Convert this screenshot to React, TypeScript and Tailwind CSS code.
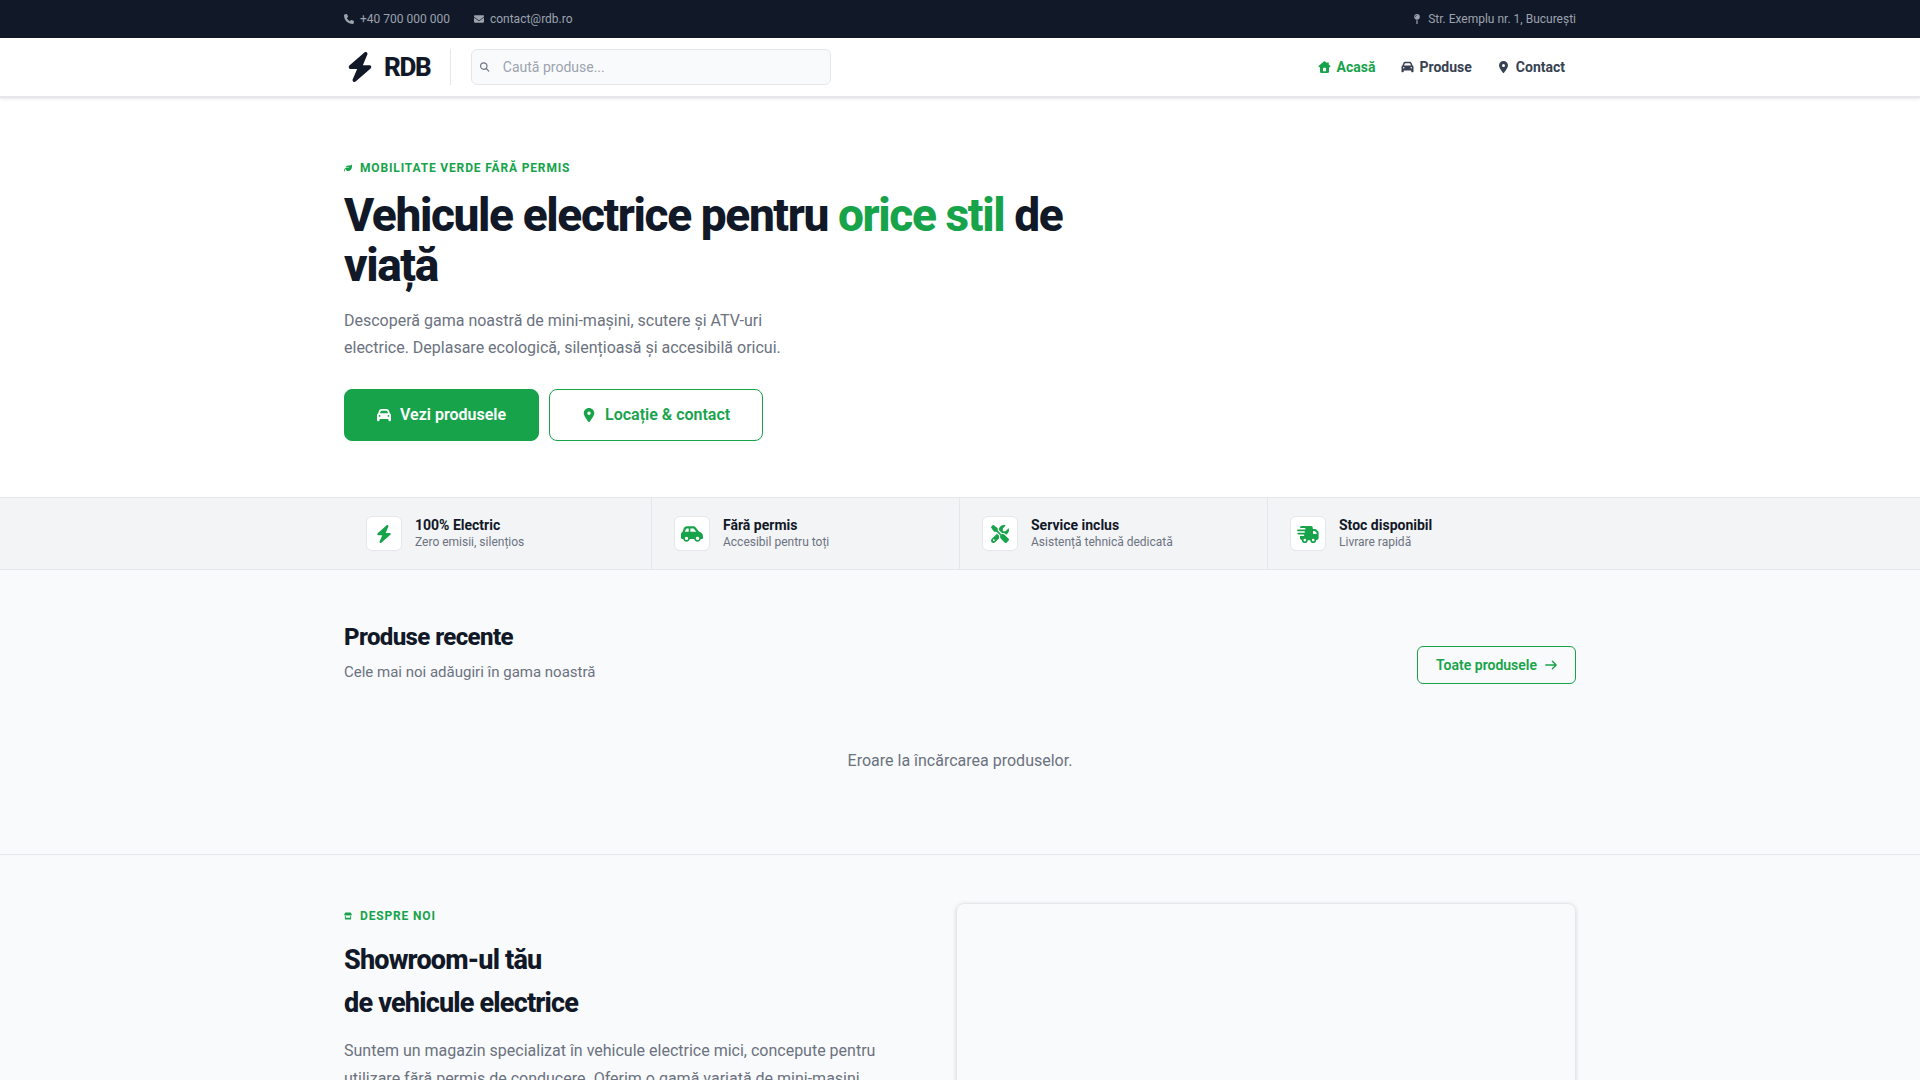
import React from "react";
import {
  FaBolt,
  FaCar,
  FaCarSide,
  FaEnvelope,
  FaLeaf,
  FaLocationDot,
  FaMagnifyingGlass,
  FaMapPin,
  FaPhone,
  FaScrewdriverWrench,
  FaStore,
} from "react-icons/fa6";

const container = "mx-auto w-full max-w-7xl px-6";

const HomeIcon = ({ className }: { className?: string }) => (
  <svg viewBox="0 0 24 24" fill="currentColor" className={className} aria-hidden="true">
    <path
      fillRule="evenodd"
      d="M10.6 1a2.2 2.2 0 0 1 2.8 0L17 4V3h3.500v4L23.300 9.400c1.200 1.100.6 3.100-1 3.100H21V21a3 3 0 0 1-3 3H6a3 3 0 0 1-3-3v-8.500H1.700c-1.600 0-2.200-2-1-3.100zM9 14.500v6h6v-6a1 1 0 0 0-1-1h-4a1 1 0 0 0-1 1z"
    />
  </svg>
);

const TruckIcon = ({ className }: { className?: string }) => (
  <svg viewBox="0 0 22 18" fill="currentColor" className={className} aria-hidden="true">
    <path
      fillRule="evenodd"
      d="M4.500 1H14a1.800 1.800 0 0 1 1.800 1.800V4H18c.5 0 .9.200 1.300.5l1.700 1.800c.4.400.6.800.6 1.300V13a2 2 0 0 1-2 2h-.4a3 3 0 0 1-6 .3h-2.400a3 3 0 0 1-6-.3A2 2 0 0 1 3 13v-2h3.500a.8.8 0 0 0 0-1.600H1.200a.8.8 0 0 1 0-1.600h6a.8.8 0 0 0 0-1.600H.9a.8.8 0 0 1 0-1.600H8a.8.8 0 0 0 0-1.500H3.200C3 1.900 3.500 1 4.500 1zM16 6v3h3.600V7.800L17.900 6zM7.800 13.800a1.300 1.300 0 1 0 0 2.600 1.300 1.300 0 0 0 0-2.600zM16.200 13.800a1.300 1.300 0 1 0 0 2.600 1.300 1.300 0 0 0 0-2.600z"
    />
  </svg>
);

const ArrowIcon = ({ className }: { className?: string }) => (
  <svg
    viewBox="0 0 12 12"
    fill="none"
    stroke="currentColor"
    strokeWidth="1.3"
    strokeLinecap="round"
    strokeLinejoin="round"
    className={className}
    aria-hidden="true"
  >
    <path d="M.8 6h10.400M7.400 2.200 11.200 6 7.400 9.800" />
  </svg>
);

const links = [
  { label: "Acasă", icon: HomeIcon, active: true },
  { label: "Produse", icon: FaCar, active: false },
  { label: "Contact", icon: FaLocationDot, active: false },
];

const features = [
  { icon: FaBolt, title: "100% Electric", text: "Zero emisii, silențios" },
  { icon: FaCarSide, title: "Fără permis", text: "Accesibil pentru toți" },
  { icon: FaScrewdriverWrench, title: "Service inclus", text: "Asistență tehnică dedicată" },
  { icon: TruckIcon, title: "Stoc disponibil", text: "Livrare rapidă" },
];

const TopBar = () => (
  <div className="bg-[#111827] text-[#9ca3af] text-xs leading-[22px]">
    <div className={`${container} flex items-center justify-between py-2`}>
      <div className="flex items-center gap-6">
        <a href="tel:+40700000000" className="flex items-center gap-[6px]">
          <FaPhone className="size-[10px]" />
          +40 700 000 000
        </a>
        <a href="mailto:contact@rdb.ro" className="flex items-center gap-[6px]">
          <FaEnvelope className="size-[10px]" />
          contact@rdb.ro
        </a>
      </div>
      <span className="flex items-center gap-[6px]">
        <FaMapPin className="size-[10px]" />
        Str. Exemplu nr. 1, București
      </span>
    </div>
  </div>
);

const Header = () => (
  <header className="relative bg-white border-b-2 border-[#e5e7eb] shadow-[0_1px_3px_rgba(0,0,0,0.1)]">
    <div className={`${container} flex items-center py-[11px]`}>
      <a
        href="#"
        className="flex items-center gap-2 pr-5 text-[26px] leading-9 font-extrabold tracking-tighter text-[#111827]"
      >
        <FaBolt className="h-[30px] w-8" />
        RDB
      </a>
      <form role="search" className="border-l border-[#e5e7eb] pl-5">
        <label className="flex h-9 w-[360px] items-center gap-[13px] rounded-md border border-[#e5e7eb] bg-[#f9fafb] px-2">
          <FaMagnifyingGlass className="size-[10px] text-[#6b7280]" />
          <input
            type="search"
            aria-label="Caută produse"
            placeholder="Caută produse..."
            className="w-full bg-transparent text-sm outline-none placeholder:text-[#9ca3af]"
          />
        </label>
      </form>
      <nav className="ml-auto flex gap-[3px]">
        {links.map(({ label, icon: Icon, active }) => (
          <a
            key={label}
            href="#"
            className={`flex items-center gap-[6px] px-[11px] text-sm font-bold ${
              active ? "text-[#16a34a]" : "text-[#374151]"
            }`}
          >
            <Icon className="h-3 w-[13px]" />
            {label}
          </a>
        ))}
      </nav>
    </div>
  </header>
);

const Hero = () => (
  <section className="bg-white">
    <div className={`${container} pt-[61px] pb-14`}>
      <p className="flex items-center gap-2 text-xs leading-[18px] font-bold tracking-[0.07em] text-[#16a34a] uppercase">
        <FaLeaf className="size-2" />
        Mobilitate verde fără permis
      </p>
      <h1 className="mt-[13px] max-w-[760px] text-[46px] leading-[50px] font-extrabold tracking-[-0.03em] text-[#111827]">
        Vehicule electrice pentru <span className="text-[#16a34a]">orice stil</span> de viață
      </h1>
      <p className="mt-[17px] max-w-[480px] text-base leading-[27px] text-[#6b7280]">
        Descoperă gama noastră de mini-mașini, scutere și ATV-uri electrice. Deplasare ecologică, silențioasă și
        accesibilă oricui.
      </p>
      <div className="mt-7 flex gap-[10px]">
        <a
          href="#"
          className="flex h-[52px] items-center gap-[9px] rounded-lg border border-[#16a34a] bg-[#16a34a] px-8 font-semibold text-white"
        >
          <FaCar className="size-[14px]" />
          Vezi produsele
        </a>
        <a
          href="#"
          className="flex h-[52px] items-center gap-[9px] rounded-lg border border-[#16a34a] px-8 font-semibold text-[#16a34a]"
        >
          <FaLocationDot className="size-[14px]" />
          Locație & contact
        </a>
      </div>
    </div>
  </section>
);

const Features = () => (
  <section className="border-y border-[#e5e7eb] bg-[#f3f4f6]">
    <div className={`${container} grid grid-cols-4`}>
      {features.map(({ icon: Icon, title, text }) => (
        <div
          key={title}
          className="flex items-center gap-[13px] border-r border-[#e5e7eb] px-[22px] py-[18px] last:border-r-0"
        >
          <div className="flex h-[35px] w-9 items-center justify-center rounded-md border border-[#e5e7eb] bg-white text-[#16a34a]">
            <Icon className="h-[18px] w-[22px]" />
          </div>
          <div>
            <p className="text-sm leading-[17px] font-bold text-[#111827]">{title}</p>
            <p className="text-xs leading-4 text-[#6b7280]">{text}</p>
          </div>
        </div>
      ))}
    </div>
  </section>
);

const Products = () => (
  <section className="border-b border-[#e5e7eb]">
    <div className={`${container} pt-12 pb-14`}>
      <div className="flex items-end justify-between">
        <div>
          <h2 className="text-2xl leading-[38px] font-extrabold tracking-tight text-[#111827]">Produse recente</h2>
          <p className="mt-1 text-[15px] leading-6 text-[#6b7280]">Cele mai noi adăugiri în gama noastră</p>
        </div>
        <a
          href="#"
          className="flex h-[38px] items-center gap-2 rounded-md border border-[#16a34a] px-[18px] text-sm font-semibold text-[#16a34a]"
        >
          Toate produsele
          <ArrowIcon className="size-3" />
        </a>
      </div>
      <p className="pt-[65px] pb-[25px] text-center text-base text-[#6b7280]">Eroare la încărcarea produselor.</p>
    </div>
  </section>
);

const About = () => (
  <section>
    <div className={`${container} grid grid-cols-[1fr_1.1fr] gap-12 py-12`}>
      <div className="pt-1">
        <p className="flex items-center gap-2 text-xs leading-[18px] font-bold tracking-[0.07em] text-[#16a34a] uppercase">
          <FaStore className="size-2" />
          Despre noi
        </p>
        <h2 className="mt-[14px] text-[27px] leading-[43px] font-extrabold tracking-[-0.03em] text-[#111827]">
          Showroom-ul tău
          <br />
          de vehicule electrice
        </h2>
        <p className="mt-3 text-base leading-7 text-[#6b7280]">
          Suntem un magazin specializat în vehicule electrice mici, concepute pentru utilizare fără permis de conducere.
          Oferim o gamă variată de mini-mașini,
        </p>
      </div>
      <div className="min-h-80 rounded-lg border border-[#e5e7eb] shadow-[0_1px_4px_rgba(0,0,0,0.14)]"></div>
    </div>
  </section>
);

const App = () => {
  return (
    <div className="min-h-screen bg-[#f9fafb] font-[Roboto,sans-serif] antialiased">
      <TopBar />
      <Header />
      <main>
        <Hero />
        <Features />
        <Products />
        <About />
      </main>
    </div>
  );
};

export default App;
